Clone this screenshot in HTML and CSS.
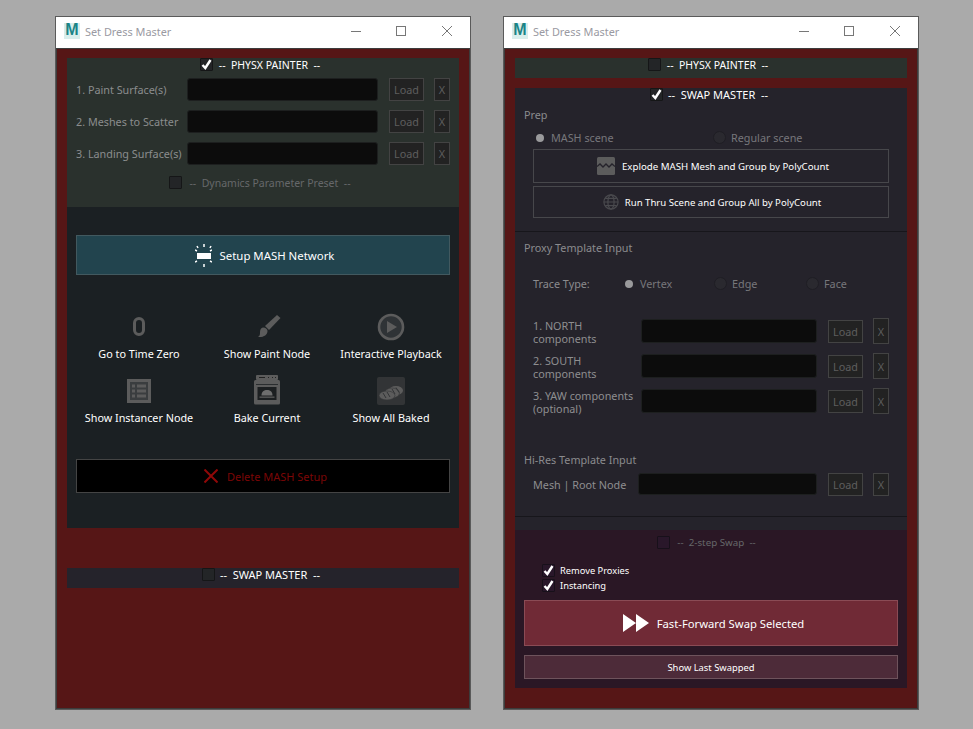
FILE: index.html
```html
<!DOCTYPE html>
<html lang="en">
<head>
<meta charset="utf-8">
<title>Set Dress Master</title>
<link rel="stylesheet" href="styles.css">
</head>
<body>
<svg class="defs" width="0" height="0" aria-hidden="true">
  <defs>
    <symbol id="tick" viewBox="0 0 13 13"><path d="M2.500 7l2.800 3 5.200-8" fill="none" stroke="#fff" stroke-width="2.400"/></symbol>
    <symbol id="titlebtns" viewBox="0 0 112 30">
      <path d="M0 13.500h10" stroke="#777" fill="none"/>
      <rect x="45.500" y="8.500" width="9" height="9" fill="none" stroke="#777"/>
      <path d="M91 8l10 10M101 8L91 18" stroke="#777" fill="none"/>
    </symbol>
  </defs>
</svg>
<main class="desktop">

  <section class="window">
    <header class="titlebar">
      <span class="logo">M</span>
      <span class="title">Set Dress Master</span>
      <svg class="winbtns" width="112" height="30"><use href="#titlebtns"/></svg>
    </header>
    <div class="client">
      <div class="panel physx">
        <div class="head">
          <span class="check on"><svg width="13" height="13"><use href="#tick"/></svg></span>
          <span class="head-text">--&nbsp; PHYSX PAINTER &nbsp;--</span>
        </div>
        <div class="row p-row"><span class="lbl w111">1. Paint Surface(s)</span><span class="field w191"></span><span class="btn load">Load</span><span class="btn x">X</span></div>
        <div class="row p-row"><span class="lbl w111">2. Meshes to Scatter</span><span class="field w191"></span><span class="btn load">Load</span><span class="btn x">X</span></div>
        <div class="row p-row"><span class="lbl w111">3. Landing Surface(s)</span><span class="field w191"></span><span class="btn load">Load</span><span class="btn x">X</span></div>
        <div class="head sub">
          <span class="check"></span>
          <span class="head-text dim">--&nbsp; Dynamics Parameter Preset &nbsp;--</span>
        </div>
      </div>
      <div class="panel mash">
        <div class="setup">
          <svg width="17" height="23" viewBox="0 0 17 23"><rect x="2" y="9" width="14" height="6" fill="#fff"/><path d="M9 0v3M9 20v3M2 2l1 2M16 2l-1 2M0 18l2-1M17 18l-2-1M0 6l2 1M17 6l-2 1" stroke="#fff" stroke-width="1.500" fill="none"/></svg>
          <span>Setup MASH Network</span>
        </div>
        <div class="tools">
          <div class="tool">
            <svg class="ico" width="28" height="28" viewBox="0 0 28 28"><rect x="9.500" y="5.500" width="9" height="16" rx="4.500" fill="none" stroke="#5c5c5c" stroke-width="3"/></svg>
            <span>Go to Time Zero</span>
          </div>
          <div class="tool">
            <svg class="ico" width="28" height="28" viewBox="0 0 28 28"><path d="M24 2l3.500 3L16 17l-4-4z" fill="#5c5c5c"/><path d="M10 14.500c3 0 4.500 2 4.500 3.500 0 4-4 6.500-9.500 6 2-1 2-3 2-5 0-2 1-4.500 3-4.500z" fill="#5c5c5c"/></svg>
            <span>Show Paint Node</span>
          </div>
          <div class="tool">
            <svg class="ico" width="28" height="28" viewBox="0 0 28 28"><circle cx="14" cy="14" r="12" fill="#2f3336" stroke="#5c5c5c" stroke-width="2.600"/><path d="M10 8l10 6-10 6z" fill="#5c5c5c"/></svg>
            <span>Interactive Playback</span>
          </div>
          <div class="tool">
            <svg class="ico" width="28" height="28" viewBox="0 0 28 28"><rect x="2" y="2" width="24" height="24" fill="#5c5c5c"/><rect x="5" y="5" width="18" height="18" fill="#3a3d3f"/><path d="M7 7.500h3v3H7zM12 7.500h9v3h-9zM7 12.500h3v3H7zM12 12.500h9v3h-9zM7 17.500h3v3H7zM12 17.500h9v3h-9z" fill="#5c5c5c"/></svg>
            <span>Show Instancer Node</span>
          </div>
          <div class="tool">
            <svg class="ico oven" width="26" height="30" viewBox="0 0 26 30"><rect x="2" y="0" width="22" height="5" rx="1" fill="#5c5c5c"/><path d="M5 2.500h6M14 2.500h1M18 2.500h1M21 2.500h1" stroke="#222" fill="none"/><rect x="0" y="5" width="26" height="24.500" rx="1.500" fill="#5c5c5c"/><rect x="2" y="9" width="22" height="1" fill="#2a2d2f"/><rect x="3.500" y="12" width="19" height="13" fill="#1c1f21"/><path d="M7.500 20.500c0-4 2.500-5.500 5.500-5.500s5.500 1.500 5.500 5.500z" fill="#6e6e6e"/><rect x="5.500" y="21.500" width="15" height="1.300" fill="#5c5c5c"/></svg>
            <span>Bake Current</span>
          </div>
          <div class="tool">
            <svg class="ico" width="28" height="28" viewBox="0 0 28 28"><rect width="28" height="28" rx="2" fill="#323436"/><ellipse cx="19" cy="13.500" rx="7" ry="4.500" fill="#5c5c5c"/><ellipse cx="15" cy="16" rx="7.500" ry="5" fill="#5c5c5c" stroke="#323436" stroke-width=".6"/><ellipse cx="10" cy="18.500" rx="8" ry="4.500" fill="#5c5c5c" stroke="#323436" stroke-width=".6"/><path d="M6 16l3 5M10 15l3 5M15 12l3 5M19 10.500l3 5" stroke="#323436" fill="none"/></svg>
            <span>Show All Baked</span>
          </div>
        </div>
        <div class="delete">
          <svg width="14" height="14" viewBox="0 0 14 14"><path d="M.5.5l13 13M13.500.5l-13 13" stroke="#8f0808" stroke-width="2" fill="none"/></svg>
          <span>Delete MASH Setup</span>
        </div>
      </div>
      <div class="panel swap-closed">
        <div class="head swap-head">
          <span class="check"></span>
          <span class="head-text">--&nbsp; SWAP MASTER &nbsp;--</span>
        </div>
      </div>
    </div>
  </section>

  <section class="window">
    <header class="titlebar">
      <span class="logo">M</span>
      <span class="title">Set Dress Master</span>
      <svg class="winbtns" width="112" height="30"><use href="#titlebtns"/></svg>
    </header>
    <div class="client">
      <div class="panel physx closed">
        <div class="head">
          <span class="check"></span>
          <span class="head-text">--&nbsp; PHYSX PAINTER &nbsp;--</span>
        </div>
      </div>
      <div class="panel swap">
        <div class="head swap-head">
          <span class="check on"><svg width="13" height="13"><use href="#tick"/></svg></span>
          <span class="head-text">--&nbsp; SWAP MASTER &nbsp;--</span>
        </div>
        <div class="sec-title">Prep</div>
        <div class="radios prep">
          <span class="radio-item w180"><span class="radio on"></span><span>MASH scene</span></span>
          <span class="radio-item w180"><span class="radio"></span><span>Regular scene</span></span>
        </div>
        <div class="wide first">
          <svg width="18" height="18" viewBox="0 0 18 18"><rect width="18" height="18" rx="1.500" fill="#5c5c5c"/><path d="M0 9.500l3-2.500 3 3 3-3 3 3 3-3 3 2.500" stroke="#25232b" stroke-width="1.300" fill="none"/></svg>
          <span>Explode MASH Mesh and Group by PolyCount</span>
        </div>
        <div class="wide second">
          <svg width="16" height="16" viewBox="0 0 18 18" fill="none" stroke="#4a4a4e" stroke-width="1.300"><circle cx="9" cy="9" r="8"/><ellipse cx="9" cy="9" rx="3.500" ry="8"/><path d="M1 9h16M2.500 5h13M2.500 13h13"/></svg>
          <span>Run Thru Scene and Group All by PolyCount</span>
        </div>
        <hr class="sep first-sep">
        <div class="sec-title proxy">Proxy Template Input</div>
        <div class="trace">
          <span class="trace-lbl">Trace Type:</span>
          <span class="radio-item w92"><span class="radio on"></span><span>Vertex</span></span>
          <span class="radio-item w92"><span class="radio"></span><span>Edge</span></span>
          <span class="radio-item w92"><span class="radio"></span><span>Face</span></span>
        </div>
        <div class="row t-row"><span class="lbl two w108">1. NORTH<br>components</span><span class="field w176"></span><span class="btn load">Load</span><span class="btn x tall">X</span></div>
        <div class="row t-row"><span class="lbl two w108">2. SOUTH<br>components</span><span class="field w176"></span><span class="btn load">Load</span><span class="btn x tall">X</span></div>
        <div class="row t-row"><span class="lbl two w108">3. YAW components<br>(optional)</span><span class="field w176"></span><span class="btn load">Load</span><span class="btn x tall">X</span></div>
        <div class="sec-title hires">Hi-Res Template Input</div>
        <div class="row m-row"><span class="lbl w105">Mesh | Root Node</span><span class="field w179"></span><span class="btn load">Load</span><span class="btn x">X</span></div>
        <hr class="sep last-sep">
      </div>
      <div class="panel two-step">
        <div class="head sub-swap">
          <span class="check dark"></span>
          <span class="head-text dim">--&nbsp; 2-step Swap &nbsp;--</span>
        </div>
        <label class="opt top"><span class="check dark on"><svg width="13" height="13"><use href="#tick"/></svg></span>Remove Proxies</label>
        <label class="opt"><span class="check dark on"><svg width="13" height="13"><use href="#tick"/></svg></span>Instancing</label>
        <div class="fast">
          <svg width="26" height="18" viewBox="0 0 26 18"><path d="M0 0l13 9-13 9zM13 0l13 9-13 9z" fill="#fff"/></svg>
          <span>Fast-Forward Swap Selected</span>
        </div>
        <div class="last">Show Last Swapped</div>
      </div>
    </div>
  </section>

</main>
</body>
</html>
```
FILE: styles.css
```css
* { box-sizing: border-box; }
html, body { margin: 0; padding: 0; }
body {
  width: 973px;
  height: 729px;
  background: #aaaaaa;
  overflow: hidden;
  font-family: "Noto Sans", "Open Sans", sans-serif;
  font-size: 10.800px;
  color: #fff;
}
.defs { display: block; height: 0; }
.desktop { display: flex; gap: 32px; padding: 16px 0 0 55px; }
.window {
  width: 416px;
  height: 694px;
  border: 1px solid #5a5a5a;
  display: flex;
  flex-direction: column;
}
.titlebar {
  height: 31px;
  background: #fff;
  display: flex;
  align-items: center;
  padding-left: 8px;
  flex: none;
}
.logo {
  width: 16px;
  height: 16px;
  margin-top: -3px;
  background: #d9eeec;
  color: #1b8487;
  font: 700 16px/14px "Liberation Sans", sans-serif;
  text-align: center;
  flex: none;
}
.title { margin: -2px 0 0 5px; color: #9a9aa2; font-size: 10.900px; width: 258px; flex: none; }
.winbtns { flex: none; margin-left: 8px; }
.client {
  flex: 1;
  background: #561616;
  border: 1px solid #3c3c3c;
  padding: 9px 10px 0;
  display: flex;
  flex-direction: column;
}
.panel { flex: none; }
.physx { background: #2a312d; height: 149px; }
.physx.closed { height: 20px; margin-bottom: 10px; }
.mash { background: #1b2023; height: 321px; padding: 28px 9px 0; }
.swap-closed { background: #25232b; height: 20px; margin-top: 40px; }
.swap { background: #25232b; height: 442px; }
.two-step { background: #2a1725; height: 158px; padding: 6px 9px 0; }

.head { display: flex; align-items: flex-start; justify-content: center; height: 20px; padding-right: 6px; gap: 6px; }
.head-text { line-height: 14px; white-space: nowrap; font-size: 10.500px; }
.swap-head { padding-right: 4px; gap: 5px; }
.swap-head .head-text { font-size: 11px; }
.sub-swap { padding-right: 9px; gap: 7px; }
.sub-swap .head-text { font-size: 9.800px; }
.dim { color: #66686a; }
.sub { margin-top: 11px; gap: 7px; }
.check {
  width: 13px;
  height: 13px;
  background: #232527;
  border: 1px solid #151617;
  border-radius: 1px;
  flex: none;
  display: block;
}
.check svg { display: block; margin: -1px; }
.check.dark { background: #29172a; border-color: #17101a; }

.row { display: flex; align-items: center; }
.p-row { height: 23px; padding-left: 9px; margin-bottom: 9px; }
.t-row { height: 24px; padding-left: 18px; margin-bottom: 11px; }
.m-row { height: 22px; padding-left: 18px; margin-top: 6px; }
.lbl { color: #8b8d8d; flex: none; white-space: nowrap; line-height: 13px; }
.two { padding-top: 2px; }
.swap .lbl { color: #8e8e90; }
.w111 { width: 111px; }
.w108 { width: 108px; }
.w105 { width: 105px; }
.field { height: 100%; background: #0c0c0c; border: 1px solid #1d1f1f; border-radius: 3px; flex: none; }
.w191 { width: 191px; }
.w176 { width: 176px; }
.w179 { width: 179px; }
.btn {
  flex: none;
  height: 23px;
  background: #222;
  border: 1px solid #434343;
  color: #5e5e5e;
  display: flex;
  align-items: center;
  justify-content: center;
}
.load { width: 35px; margin-left: 11px; }
.x { width: 16px; margin-left: 10px; }
.x.tall { height: 26px; }

.setup {
  height: 40px;
  background: #22444e;
  border: 1px solid #42595f;
  display: flex;
  align-items: center;
  justify-content: center;
  gap: 8px;
  padding-left: 3px;
  font-size: 11.400px;
}
.tools {
  display: grid;
  grid-template-columns: 126px 130px 118px;
  row-gap: 15px;
  margin-top: 38px;
}
.tool { display: flex; flex-direction: column; align-items: center; height: 49px; }
.ico { height: 28px; flex: none; margin-bottom: 5px; }
.ico.oven { height: 30px; margin: -2px 0 5px; }
.tool span { line-height: 16px; white-space: nowrap; font-size: 10.800px; }
.delete {
  height: 34px;
  background: #000;
  border: 1px solid #444;
  margin-top: 33px;
  padding-left: 5px;
  display: flex;
  align-items: center;
  justify-content: center;
  gap: 9px;
  color: #7b0606;
  font-size: 11px;
}

.sec-title { color: #8b8b8e; line-height: 14px; padding-left: 9px; }
.radios, .trace { display: flex; padding-left: 18px; align-items: center; color: #77777b; }
.prep { margin-top: 9px; height: 13px; }
.radio-item { display: flex; align-items: center; gap: 5px; flex: none; }
.w180 { width: 180px; }
.w92 { width: 92px; }
.radio { width: 13px; height: 13px; border-radius: 50%; background: #2a292f; border: 1px solid #1f1e24; flex: none; display: block; }
.radio.on { background: #9a9a9c; background-clip: content-box; padding: 1.500px; border-color: transparent; }
.wide {
  margin: 0 18px;
  border: 1px solid #47474b;
  display: flex;
  align-items: center;
  justify-content: center;
  gap: 7px;
  background: #25232b;
}
.first { height: 34px; margin-top: 5px; padding-left: 4px; font-size: 9.700px; }
.second { height: 32px; margin-top: 3px; padding-left: 2px; font-size: 9.600px; gap: 6px; }
.sep { border: 0; height: 1px; background: #17161b; margin: 0; }
.first-sep { margin-top: 13px; }
.proxy { margin-top: 9px; }
.trace { margin-top: 22px; height: 13px; }
.trace-lbl { width: 89px; color: #8b8b8e; flex: none; }
.trace + .t-row { margin-top: 29px; }
.hires { margin-top: 40px; }
.last-sep { margin-top: 21px; }

.opt { display: flex; align-items: center; gap: 5px; height: 13px; margin: 2px 0 0 18px; font-size: 9.300px; }
.opt.top { margin-top: 8px; }
.fast {
  height: 46px;
  margin-top: 8px;
  padding-left: 5px;
  background: #702a36;
  border: 1px solid #8a4b55;
  display: flex;
  align-items: center;
  justify-content: center;
  gap: 8px;
  font-size: 11.250px;
}
.last {
  height: 24px;
  margin-top: 9px;
  background: #4d2b39;
  border: 1px solid #6e535c;
  display: flex;
  align-items: center;
  justify-content: center;
  font-size: 9.400px;
}
```
